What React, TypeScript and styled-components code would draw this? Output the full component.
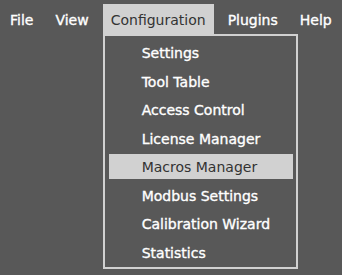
import React from "react";
import styled, { createGlobalStyle } from "styled-components";

const GlobalStyle = createGlobalStyle`
  html, body {
    margin: 0;
    padding: 0;
    background: #585858;
  }
  body {
    font-family: "DejaVu Sans", Verdana, Tahoma, sans-serif;
  }
`;

const Screen = styled.div`
  width: 342px;
  height: 275px;
  background: #585858;
  overflow: hidden;
`;

const MenuBar = styled.nav`
  display: flex;
  gap: 6px;
  padding: 4px 0 0 2px;
`;

const MenuItem = styled.div<{ $active?: boolean }>`
  position: relative;
  height: 30px;
  box-sizing: border-box;
  padding: 2px 8px 0;
  line-height: 28px;
  font-size: 14px;
  white-space: nowrap;
  color: ${(p) => (p.$active ? "#333333" : "#ffffff")};
  background: ${(p) => (p.$active ? "#d1d1d1" : "transparent")};
  -webkit-text-stroke: ${(p) => (p.$active ? "0" : "0.35px #ffffff")};
`;

const Dropdown = styled.div`
  position: absolute;
  top: 100%;
  left: 0;
  width: 195px;
  box-sizing: border-box;
  border: 2px solid #d1d1d1;
  background: #585858;
  padding: 4px 3px 2.5px 4px;
  display: flex;
  flex-direction: column;
  gap: 3.5px;
`;

const DropItem = styled.div<{ $selected?: boolean }>`
  height: 25px;
  box-sizing: border-box;
  padding: 1px 0 0 33px;
  line-height: 24px;
  font-size: 14px;
  white-space: nowrap;
  color: ${(p) => (p.$selected ? "#333333" : "#ffffff")};
  background: ${(p) => (p.$selected ? "#d1d1d1" : "transparent")};
  -webkit-text-stroke: ${(p) => (p.$selected ? "0" : "0.35px #ffffff")};
`;

const topMenus = ["File", "View", "Configuration", "Plugins", "Help"];
const configItems = [
  "Settings",
  "Tool Table",
  "Access Control",
  "License Manager",
  "Macros Manager",
  "Modbus Settings",
  "Calibration Wizard",
  "Statistics",
];

export default function App() {
  return (
    <>
      <GlobalStyle />
      <Screen>
        <MenuBar>
          {topMenus.map((m) => {
            const open = m === "Configuration";
            return (
              <MenuItem key={m} $active={open}>
                {m}
                {open && (
                  <Dropdown>
                    {configItems.map((it) => (
                      <DropItem key={it} $selected={it === "Macros Manager"}>
                        {it}
                      </DropItem>
                    ))}
                  </Dropdown>
                )}
              </MenuItem>
            );
          })}
        </MenuBar>
      </Screen>
    </>
  );
}
